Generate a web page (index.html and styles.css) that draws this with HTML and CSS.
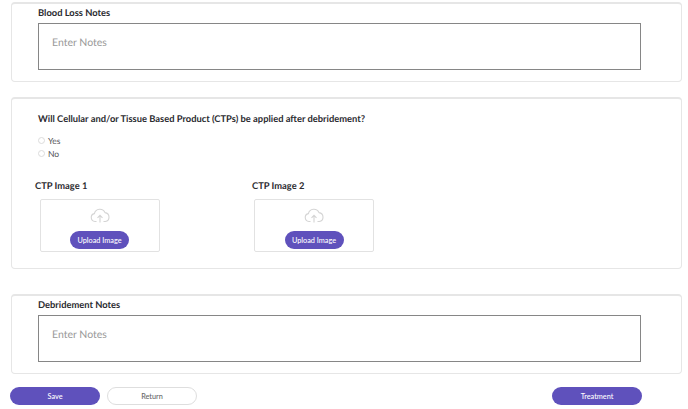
FILE: index.html
```html
<!DOCTYPE html>
<html lang="en">
  <head>
    <meta charset="UTF-8" />
    <meta name="viewport" content="width=device-width, initial-scale=1.0" />
    <title>Debridement</title>
    <link rel="stylesheet" href="styles.css">
  </head>
  <body>
    <section class="card notes-card">
      <h3 class="notes-title">Blood Loss Notes</h3>
      <div class="notes-box">Enter Notes</div>
    </section>

    <section class="card ctp-card">
      <h3 class="question">Will Cellular and/or Tissue Based Product (CTPs) be applied after debridement?</h3>
      <label class="radio-row"><input type="radio" name="ctp" /> Yes</label>
      <label class="radio-row"><input type="radio" name="ctp" /> No</label>
      <div class="uploads">
        <div class="upload">
          <h4 class="upload-title">CTP Image 1</h4>
          <div class="upload-box">
            <svg class="cloud" viewBox="0 0 20 15" width="20" height="15">
              <path d="M6.5 13.5H5a4 4 0 0 1-.6-7.9A5.6 5.6 0 0 1 15 4.6a4.5 4.5 0 0 1 .3 8.9h-1.8" />
              <path d="M10 14.5V7.5M7.5 9.8 10 7.3l2.5 2.5" />
            </svg>
            <button class="btn upload-btn">Upload Image</button>
          </div>
        </div>
        <div class="upload">
          <h4 class="upload-title">CTP Image 2</h4>
          <div class="upload-box">
            <svg class="cloud" viewBox="0 0 20 15" width="20" height="15">
              <path d="M6.5 13.5H5a4 4 0 0 1-.6-7.9A5.6 5.6 0 0 1 15 4.6a4.5 4.5 0 0 1 .3 8.9h-1.8" />
              <path d="M10 14.5V7.5M7.5 9.8 10 7.3l2.5 2.5" />
            </svg>
            <button class="btn upload-btn">Upload Image</button>
          </div>
        </div>
      </div>
    </section>

    <section class="card notes-card debridement">
      <h3 class="notes-title">Debridement Notes</h3>
      <div class="notes-box">Enter Notes</div>
    </section>

    <footer class="actions">
      <button class="btn action-btn">Save</button>
      <button class="btn action-btn return-btn">Return</button>
      <button class="btn action-btn treatment-btn">Treatment</button>
    </footer>
  </body>
</html>
```

FILE: styles.css
```css
* {
  box-sizing: border-box;
}
body {
  margin: 0;
  padding: 2px 6px 0 11px;
  height: 409px;
  overflow: hidden;
  background: #fff;
  color: #2b2b30;
  font-family: 'Lato', sans-serif;
  text-rendering: geometricPrecision;
}
h3,
h4 {
  margin: 0;
  font-weight: 700;
}
.card {
  border: 1px solid #e6e6e6;
  border-top-width: 2px;
  border-radius: 4px;
  background: #fff;
}
.notes-card {
  height: 80px;
  padding: 3px 40px 0 26px;
}
.notes-title {
  font-size: 9.35px;
  line-height: 12px;
  margin-bottom: 4px;
}
.notes-box {
  height: 47px;
  padding: 12px 13px;
  border: 1px solid #868686;
  color: #9a9a9a;
  font-size: 10.5px;
  line-height: 15px;
}
.ctp-card {
  height: 172px;
  margin-top: 15px;
  padding: 14px 26px 0;
}
.question {
  font-size: 9.35px;
  line-height: 12px;
  margin-bottom: 9px;
}
.radio-row {
  display: flex;
  align-items: center;
  gap: 3px;
  height: 13px;
  color: #55555a;
  font-size: 8.5px;
}
.radio-row input {
  appearance: none;
  width: 7px;
  height: 7px;
  margin: 0;
  border: 1px solid #dcdcdc;
  border-radius: 50%;
}
.uploads {
  display: flex;
  margin: 20px 0 0 -3px;
}
.upload {
  width: 217px;
}
.upload-title {
  font-size: 9.35px;
  line-height: 12px;
  margin-bottom: 7px;
}
.upload-box {
  display: flex;
  flex-direction: column;
  align-items: center;
  width: 120px;
  height: 53px;
  margin-left: 4.5px;
  padding-top: 8px;
  border: 1px solid #e2e2e2;
  border-radius: 2px;
}
.upload + .upload .upload-box {
  margin-left: 2px;
}
.cloud {
  display: block;
  margin-bottom: 8px;
  fill: none;
  stroke: #d4d4d4;
  stroke-width: 1.1;
}
.btn {
  border: 0;
  padding: 0;
  background: #5f51bc;
  color: #fff;
  font-family: inherit;
  font-size: 7.3px;
  font-weight: 500;
}
.upload-btn {
  width: 59px;
  height: 18px;
  border-radius: 9px;
}
.debridement {
  margin-top: 25px;
}
.actions {
  display: flex;
  gap: 7px;
  margin: 13px 0 0 -1px;
  padding-right: 40px;
}
.action-btn {
  width: 90px;
  height: 18px;
  border-radius: 9px;
}
.return-btn {
  border: 1px solid #dedede;
  background: #fff;
  color: #666;
}
.treatment-btn {
  margin-left: auto;
}
```
